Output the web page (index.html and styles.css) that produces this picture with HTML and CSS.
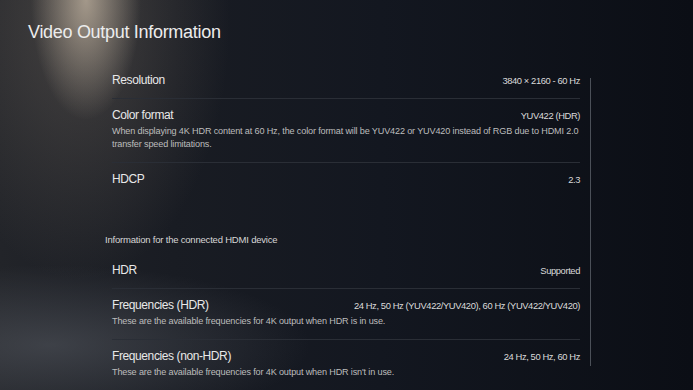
FILE: index.html
```html
<!DOCTYPE html>
<html lang="en">
<head>
    <meta charset="UTF-8">
    <meta name="viewport" content="width=device-width, initial-scale=1.0">
    <title>Video Output Information</title>
    <link rel="stylesheet" href="styles.css">
</head>
<body>
    <div id="screen">
        <h1 class="page-title">Video Output Information</h1>

        <div class="panel">
            <div class="scroll-thumb"></div>

            <div class="row">
                <div class="row-head">
                    <span class="row-label">Resolution</span>
                    <span class="row-value">3840 × 2160 - 60 Hz</span>
                </div>
            </div>
            <div class="row">
                <div class="row-head">
                    <span class="row-label">Color format</span>
                    <span class="row-value">YUV422 (HDR)</span>
                </div>
                <p class="row-desc">When displaying 4K HDR content at 60 Hz, the color format will be YUV422 or YUV420 instead of RGB due to HDMI 2.0 transfer speed limitations.</p>
            </div>
            <div class="row last">
                <div class="row-head">
                    <span class="row-label">HDCP</span>
                    <span class="row-value">2.3</span>
                </div>
            </div>

            <div class="section-title">Information for the connected HDMI device</div>

            <div class="row">
                <div class="row-head">
                    <span class="row-label">HDR</span>
                    <span class="row-value">Supported</span>
                </div>
            </div>
            <div class="row">
                <div class="row-head">
                    <span class="row-label">Frequencies (HDR)</span>
                    <span class="row-value">24 Hz, 50 Hz (YUV422/YUV420), 60 Hz (YUV422/YUV420)</span>
                </div>
                <p class="row-desc">These are the available frequencies for 4K output when HDR is in use.</p>
            </div>
            <div class="row last">
                <div class="row-head">
                    <span class="row-label">Frequencies (non-HDR)</span>
                    <span class="row-value">24 Hz, 50 Hz, 60 Hz</span>
                </div>
                <p class="row-desc">These are the available frequencies for 4K output when HDR isn't in use.</p>
            </div>
        </div>
    </div>
</body>
</html>
```

FILE: styles.css
```css
html, body {
    margin: 0;
    padding: 0;
}

body {
    font-family: "Liberation Sans", Arial, sans-serif;
    background-color: #0d1017;
    color: #e4e4e4;
}

#screen {
    width: 693px;
    height: 390px;
    overflow: hidden;
    background:
        radial-gradient(ellipse 55px 120px at 86px 0, rgba(205, 190, 170, 0.7), rgba(205, 190, 170, 0) 100%),
        radial-gradient(ellipse 150px 260px at 80px 20px, rgba(120, 110, 100, 0.42), rgba(120, 110, 100, 0) 100%),
        radial-gradient(ellipse 260px 80px at 50px 345px, rgba(92, 96, 104, 0.5), rgba(92, 96, 104, 0) 100%),
        linear-gradient(to right, #222429 0%, #191c23 25%, #131720 55%, #0b0e15 100%);
}

.page-title {
    margin: 0;
    padding: 20px 0 0 28px;
    font-size: 18px;
    line-height: 24px;
    font-weight: normal;
    letter-spacing: -0.3px;
    color: #ececec;
}

.panel {
    position: relative;
    width: 486px;
    margin: 20px 0 0 105px;
}

.scroll-thumb {
    position: absolute;
    top: 14px;
    right: 0;
    width: 1px;
    height: 288px;
    background-color: #4b5058;
}

.row {
    width: 468px;
    margin-left: 7px;
    padding: 7px 0 9px;
    border-bottom: 1px solid #2a2e36;
}

.row.last {
    border-bottom: none;
}

.row-head {
    display: flex;
    justify-content: space-between;
    align-items: center;
    height: 18px;
}

.row-label {
    font-size: 12px;
    letter-spacing: -0.4px;
    color: #e8e8e8;
}

.row-value {
    font-size: 9.4px;
    letter-spacing: -0.4px;
    color: #dadada;
}

.row-desc {
    margin: 1px 0 2px;
    font-size: 9.1px;
    line-height: 13px;
    letter-spacing: -0.15px;
    color: #bdbdbd;
}

.section-title {
    margin: 36px 0 7px;
    font-size: 9.5px;
    line-height: 14px;
    letter-spacing: -0.2px;
    color: #d6d6d6;
}
```
